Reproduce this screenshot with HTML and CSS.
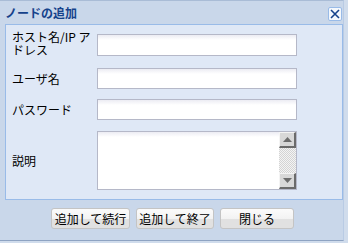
FILE: index.html
```html
<!DOCTYPE html>
<html lang="ja">
<head>
  <meta charset="UTF-8">
  <title>ノードの追加</title>
  <link rel="stylesheet" href="styles.css">
</head>
<body>

<div class="window">
  <div class="header">
    <span class="title">ノードの追加</span>
    <button class="close">
      <svg width="10" height="10" viewBox="0 0 10 10">
        <path d="M1 1 L9 9 M9 1 L1 9" stroke="#15428b" stroke-width="1.6" fill="none"/>
      </svg>
    </button>
  </div>

  <div class="panel">
    <div class="row row-host">
      <label class="label">ホスト名/IP アドレス</label>
      <input class="input" type="text">
    </div>
    <div class="row row-user">
      <label class="label">ユーザ名</label>
      <input class="input" type="text">
    </div>
    <div class="row row-pass">
      <label class="label">パスワード</label>
      <input class="input" type="password">
    </div>
    <div class="row row-desc">
      <label class="label">説明</label>
      <div class="memo">
        <textarea class="memo-text"></textarea>
        <div class="scrollbar">
          <div class="sb-btn">
            <svg width="9" height="5" viewBox="0 0 9 5"><path d="M0 5 L4.5 0 L9 5 Z" fill="#6d6d6d"/></svg>
          </div>
          <div class="sb-track"></div>
          <div class="sb-btn">
            <svg width="9" height="5" viewBox="0 0 9 5"><path d="M0 0 L4.5 5 L9 0 Z" fill="#6d6d6d"/></svg>
          </div>
        </div>
      </div>
    </div>
  </div>

  <div class="footer">
    <button class="btn btn-continue">追加して続行</button>
    <button class="btn btn-finish">追加して終了</button>
    <button class="btn btn-close">閉じる</button>
  </div>
</div>

</body>
</html>
```

FILE: styles.css
```css
body {
  margin: 0;
  width: 348px;
  height: 243px;
  background-color: #d0dcec;
  font-family: "Noto Sans CJK JP", "DejaVu Sans", sans-serif;
  font-size: 12px;
  color: #000;
}

.window {
  width: 344px;
  height: 241px;
  background-color: #c9d7ea;
  border-top: 1px solid #a9bcd6;
  border-bottom: 1px solid #8ea3c2;
  border-right: 1px solid #b9cbe4;
  box-sizing: border-box;
  display: flex;
  flex-direction: column;
}

.header {
  height: 23px;
  display: flex;
  align-items: center;
  justify-content: space-between;
  padding: 0 1px 0 5px;
}

.title {
  font-size: 12px;
  font-weight: bold;
  color: #15428b;
  line-height: 16px;
  margin-top: 1px;
}

.close {
  width: 14px;
  height: 14px;
  padding: 0;
  margin-top: 2px;
  border: 1px solid #99bbe8;
  border-radius: 2px;
  background-color: #f4f8fd;
  display: flex;
  align-items: center;
  justify-content: center;
}

.panel {
  margin: 0 0 0 5px;
  width: 338px;
  height: 176px;
  box-sizing: border-box;
  border: 1px solid #99bbe8;
  background-color: #dfe8f6;
  padding: 0 0 0 6px;
}

.row {
  display: flex;
  align-items: center;
}

.row-host { margin-top: 8px; }
.row-user { margin-top: 12px; }
.row-pass { margin-top: 10px; }
.row-desc { margin-top: 11px; }

.label {
  width: 85px;
  line-height: 13px;
  padding-right: 6px;
  box-sizing: border-box;
}

.row-host .label {
  margin-top: -3px;
}

.input {
  width: 200px;
  height: 22px;
  margin: 0;
  box-sizing: border-box;
  border: 1px solid #b5b8c8;
  background: linear-gradient(#ececf3, #ffffff 5px);
  padding: 0 3px;
  font-family: inherit;
  font-size: 12px;
}

.row-user .input,
.row-pass .input {
  height: 21px;
}

.memo {
  width: 200px;
  height: 59px;
  box-sizing: border-box;
  border: 1px solid #b5b8c8;
  display: flex;
  background: linear-gradient(#ececf3, #ffffff 5px);
}

.memo-text {
  flex: 1;
  border: none;
  background: transparent;
  resize: none;
  overflow: hidden;
  padding: 2px 3px;
  margin: 0;
  font-family: inherit;
  font-size: 12px;
}

.scrollbar {
  width: 17px;
  display: flex;
  flex-direction: column;
}

.sb-btn {
  height: 16px;
  box-sizing: border-box;
  background-color: #d8d8d8;
  border-top: 1px solid #f4f4f4;
  border-left: 1px solid #f4f4f4;
  border-right: 2px solid #6b6b6b;
  border-bottom: 2px solid #6b6b6b;
  display: flex;
  align-items: center;
  justify-content: center;
}

.sb-track {
  flex: 1;
  background-color: #f0f0f0;
  background-image: repeating-conic-gradient(#d4d4d4 0 25%, #f4f4f4 0 50%);
  background-size: 2px 2px;
}

.footer {
  display: flex;
  justify-content: center;
  gap: 6px;
  padding: 8px 0 0 2px;
}

.btn {
  height: 21px;
  padding: 0;
  border: 1px solid #c4c4c4;
  border-radius: 3px;
  background: linear-gradient(#fbfbfb 0, #f2f2f2 55%, #e1e1e1 55%, #e1e1e1 100%);
  font-family: inherit;
  font-size: 12px;
  color: #000;
  line-height: 18px;
}

.btn-continue { width: 79px; }
.btn-finish { width: 78px; }
.btn-close { width: 74px; }
```
